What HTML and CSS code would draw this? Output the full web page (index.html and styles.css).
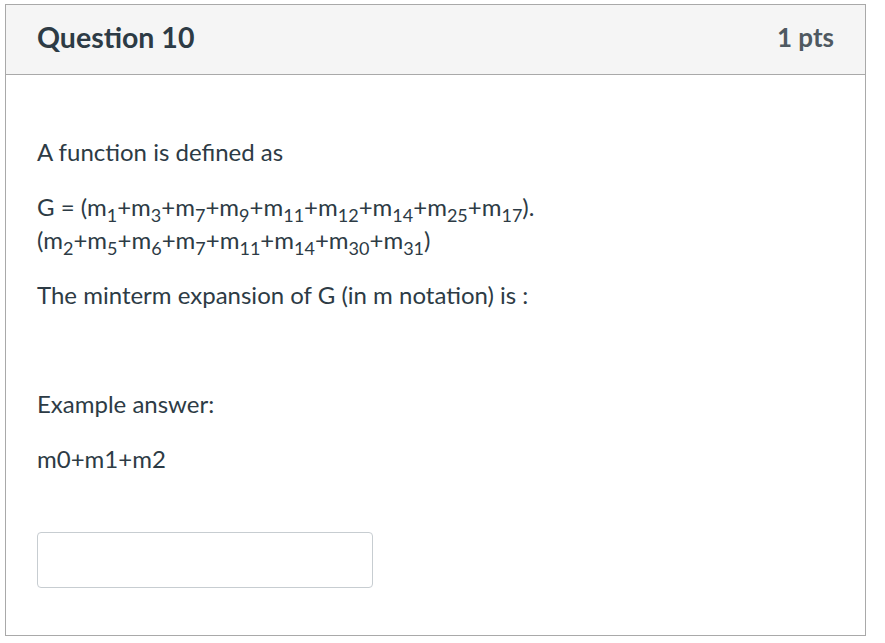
FILE: index.html
```html
<!DOCTYPE html>
<html>
<head>
<meta charset="utf-8">
<link rel="stylesheet" href="styles.css">
</head>
<body>
<div class="card">
  <div class="header">
    <div class="title">Question 10</div>
    <div class="pts">1 pts</div>
  </div>
  <div class="content">
    <p class="p1">A function is defined as</p>
    <p class="formula">G = (m<sub>1</sub>+m<sub>3</sub>+m<sub>7</sub>+m<sub>9</sub>+m<sub>11</sub>+m<sub>12</sub>+m<sub>14</sub>+m<sub>25</sub>+m<sub>17</sub>).<br>(m<sub>2</sub>+m<sub>5</sub>+m<sub>6</sub>+m<sub>7</sub>+m<sub>11</sub>+m<sub>14</sub>+m<sub>30</sub>+m<sub>31</sub>)</p>
    <p>The minterm expansion of G (in m notation) is :</p>
    <p class="gap">&nbsp;</p>
    <p>Example answer:</p>
    <p>m0+m1+m2</p>
    <div class="answer"><input type="text" class="input"></div>
  </div>
</div>
</body>
</html>
```
FILE: styles.css
```css
html, body {
  margin: 0;
  padding: 0;
  background: #fff;
}
body {
  font-family: Lato, "Open Sans", sans-serif;
  color: #2d3b45;
}
.card {
  margin: 4px 0 0 5px;
  border: 1px solid #a9a9a9;
  box-sizing: border-box;
  width: 861px;
  height: 632px;
}
.header {
  display: flex;
  align-items: center;
  justify-content: space-between;
  height: 70px;
  box-sizing: border-box;
  padding: 0 31px 6px 31px;
  background: #f5f5f5;
  border-bottom: 1px solid #a9a9a9;
}
.title {
  font-size: 28.5px;
  font-weight: 700;
  color: #2d3b45;
}
.pts {
  font-size: 26px;
  font-weight: 700;
  color: #4f5961;
}
.content {
  padding: 60px 31px 0 31px;
  font-size: 24px;
}
.content p {
  margin: 0 0 21px 0;
  line-height: 33.6px;
}
sub {
  font-size: 18px;
  line-height: 0;
}
.answer {
  margin-top: 57px;
}
.input {
  display: block;
  margin: 0;
  width: 336px;
  height: 56px;
  box-sizing: border-box;
  border: 1px solid #c7cdd1;
  border-radius: 4px;
  background: #fff;
}
```
